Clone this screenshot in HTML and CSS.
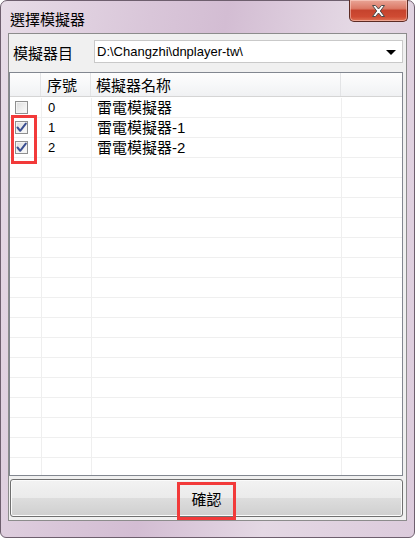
FILE: index.html
```html
<!DOCTYPE html>
<html lang="zh-Hant">
<head>
  <meta charset="UTF-8" />
  <title>選擇模擬器</title>
  <link rel="stylesheet" href="styles.css">
</head>
<body>
  <div class="window">
    <!-- Заголовок окна -->
    <div class="titlebar">
      <span class="title">選擇模擬器</span>
      <div class="close-btn">
        <svg width="15" height="14" viewBox="0 0 15 14">
          <path d="M1.5 1.5 L4.5 1.5 L7.5 5 L10.5 1.5 L13.5 1.5 L9.3 7 L13.5 12.5 L10.5 12.5 L7.5 9 L4.5 12.5 L1.5 12.5 L5.7 7 Z"
                fill="#fff" stroke="#4a4a4a" stroke-width="1" stroke-linejoin="round" />
        </svg>
      </div>
    </div>

    <div class="client">
      <div class="path-row">
        <div class="path-label">模擬器目錄</div>
        <div class="combo">
          <span>D:\Changzhi\dnplayer-tw\</span>
          <i class="arrow"></i>
        </div>
      </div>

      <div class="grid">
        <div class="grid-head">
          <div class="c1"></div>
          <div class="c2">序號</div>
          <div class="c3">模擬器名称</div>
          <div class="c4"></div>
        </div>
        <div class="grid-body" id="rows">
          <div class="row">
            <div class="c1"><span class="check"></span></div>
            <div class="c2">0</div>
            <div class="c3">雷電模擬器</div>
            <div class="c4"></div>
          </div>
          <div class="row">
            <div class="c1"><span class="check checked"></span></div>
            <div class="c2">1</div>
            <div class="c3">雷電模擬器-1</div>
            <div class="c4"></div>
          </div>
          <div class="row">
            <div class="c1"><span class="check checked"></span></div>
            <div class="c2">2</div>
            <div class="c3">雷電模擬器-2</div>
            <div class="c4"></div>
          </div>
        </div>
      </div>

      <button class="ok-btn">確認</button>
    </div>

    <!-- Красные рамки поверх -->
    <div class="mark mark-checks"></div>
    <div class="mark mark-ok"></div>
  </div>

  <script>
    const rows = document.getElementById("rows");
    const tick = '<svg width="11" height="11" viewBox="0 0 11 11"><path d="M1.5 5.5 L4.2 8.8 L9.8 1.6" fill="none" stroke="#3b4f91" stroke-width="2" stroke-linecap="round" stroke-linejoin="round"/></svg>';

    document.querySelectorAll(".check.checked").forEach(c => c.innerHTML = tick);

    for (let i = 0; i < 17; i++) {
      const row = document.createElement("div");
      row.className = "row";
      row.innerHTML = '<div class="c1"></div><div class="c2"></div><div class="c3"></div><div class="c4"></div>';
      rows.appendChild(row);
    }
  </script>
</body>
</html>
```

FILE: styles.css
```css
* {
  box-sizing: border-box;
}

body {
  margin: 0;
  background: #fff;
  font-family: "Liberation Sans", "Noto Sans CJK TC", sans-serif;
}

.window {
  position: relative;
  width: 415px;
  height: 538px;
  border: 1px solid #6e5f6e;
  border-radius: 7px 7px 6px 6px;
  background: linear-gradient(100deg, #e7dce7 0%, #d9c6d9 30%, #d3bdd3 45%, #e4d8e4 70%, #dccbdc 100%);
  display: flex;
  flex-direction: column;
}

.titlebar {
  height: 32px;
  display: flex;
  align-items: flex-start;
  padding-left: 9px;
}

.title {
  font-family: "Noto Sans CJK TC", sans-serif;
  font-size: 15px;
  line-height: 20px;
  margin-top: 8px;
  color: #000;
}

.close-btn {
  margin-left: auto;
  margin-right: 6px;
  margin-top: -1px;
  width: 59px;
  height: 22px;
  border: 1px solid #5c2b24;
  border-top: none;
  border-radius: 0 0 5px 5px;
  background: linear-gradient(#e9a597 0%, #dc7a67 40%, #c6432d 50%, #cf4b33 80%, #e07356 100%);
  box-shadow: inset 0 0 0 1px rgba(255, 220, 210, 0.5);
  display: flex;
  justify-content: center;
  align-items: center;
}

.client {
  flex: 1;
  margin: 0 7px 16px 7px;
  border: 1px solid #8c8c8c;
  background: #f0f0f0;
  display: flex;
  flex-direction: column;
  padding: 0 1px 0 0;
}

.path-row {
  display: flex;
  align-items: flex-start;
  padding: 6px 2px 0 4px;
  height: 38px;
}

.path-label {
  width: 62px;
  height: 24px;
  overflow: hidden;
  font-family: "Noto Sans CJK TC", sans-serif;
  font-size: 15px;
  line-height: 21px;
  margin-top: 2px;
  color: #000;
}

.combo {
  margin-left: 19px;
  flex: 1;
  height: 23px;
  background: #fff;
  border: 1px solid #c9c9c9;
  display: flex;
  align-items: center;
  padding: 0 6px 0 2px;
  font-size: 13px;
  color: #000;
}

.arrow {
  margin-left: auto;
  width: 0;
  height: 0;
  border-left: 5px solid transparent;
  border-right: 5px solid transparent;
  border-top: 5px solid #000;
  margin-top: 1px;
}

.grid {
  height: 404px;
  margin-right: 2px;
  border: 1px solid #828790;
  background: #fff;
  overflow: hidden;
}

.grid-head, .row {
  display: flex;
}

.grid-head {
  height: 24px;
  background: linear-gradient(#fdfdfd 0%, #f7f8f9 50%, #f0f1f3 100%);
  border-bottom: 1px solid #d5d5d5;
  font-family: "Noto Sans CJK TC", sans-serif;
  font-size: 15px;
  line-height: 23px;
}

.grid-body {
  padding-top: 1px;
}

.row {
  height: 20px;
  border-bottom: 1px solid #efefef;
  align-items: center;
}

.c1 {
  width: 32px;
  padding-left: 5px;
  border-right: 1px solid #efefef;
  height: 100%;
  display: flex;
  align-items: center;
}

.c2 {
  width: 50px;
  padding-left: 6px;
  border-right: 1px solid #efefef;
  height: 100%;
  font-size: 13px;
  line-height: 19px;
}

.c3 {
  width: 250px;
  padding-left: 5px;
  border-right: 1px solid #efefef;
  height: 100%;
  font-family: "Liberation Sans", "Noto Sans CJK TC", sans-serif;
  font-size: 15px;
  line-height: 19px;
}

.c4 {
  flex: 1;
}

.grid-head .c1, .grid-head .c2, .grid-head .c3 {
  border-right: 1px solid #e3e4e6;
  font-family: "Noto Sans CJK TC", sans-serif;
  font-size: 15px;
  line-height: 23px;
}

.grid-head .c1 {
  width: 31px;
}

.check {
  width: 13px;
  height: 13px;
  border: 1px solid #8f8f8f;
  background: linear-gradient(135deg, #dcdcdc 0%, #f0f0f0 60%, #fbfbfb 100%);
  box-shadow: inset 0 0 0 1px #f4f4f4;
  display: flex;
  justify-content: center;
  align-items: center;
}

.ok-btn {
  margin: 3px 2px 0 1px;
  height: 38px;
  border: 1px solid #707070;
  border-radius: 3px;
  background: linear-gradient(#f2f2f2 0%, #ebebeb 50%, #dddddd 51%, #cfcfcf 100%);
  box-shadow: inset 0 0 0 1px #fbfbfb;
  font-family: "Noto Sans CJK TC", sans-serif;
  font-size: 15px;
  color: #000;
  padding: 0;
}

.mark {
  position: absolute;
  border: 3px solid #f23a3a;
}

.mark-checks {
  left: 10px;
  top: 114px;
  width: 26px;
  height: 49px;
}

.mark-ok {
  left: 176px;
  top: 481px;
  width: 59px;
  height: 38px;
}
```
